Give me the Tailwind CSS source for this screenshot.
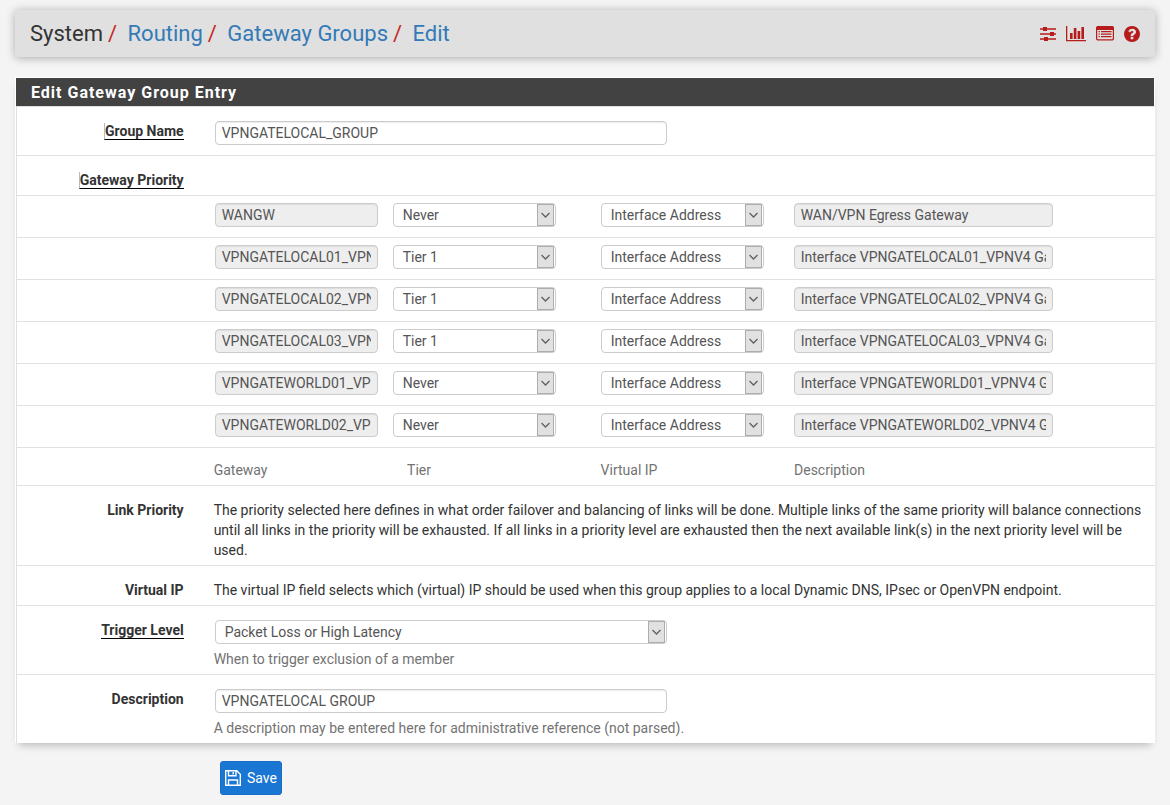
<!DOCTYPE html>
<html lang="en">
<head>
<meta charset="utf-8">
<meta name="viewport" content="width=device-width, initial-scale=1">
<title>System: Routing: Gateway Groups: Edit</title>
<script src="https://cdn.jsdelivr.net/npm/@tailwindcss/browser@4"></script>
</head>
<body class="min-h-screen bg-[#f4f4f4] px-[15px] py-[10px] font-['Roboto',sans-serif] text-sm leading-5 text-[#333]">
<header class="flex h-[47px] items-center justify-between rounded-[3px] bg-[#e0e0e0] px-[15px] shadow-[0_1px_10px_rgba(0,0,0,0.3)]">
  <nav aria-label="Breadcrumb">
    <ol class="flex text-[22px] leading-6">
      <li>System</li>
      <li><span class="px-[5px] text-[#c62828]">/</span> <a href="#" class="text-[#337ab7]">Routing</a></li>
      <li><span class="px-[5px] text-[#c62828]">/</span> <a href="#" class="text-[#337ab7]">Gateway Groups</a></li>
      <li><span class="px-[5px] text-[#c62828]">/</span> <a href="#" class="text-[#337ab7]">Edit</a></li>
    </ol>
  </nav>
  <div class="flex items-center gap-[10px] text-[#b71c1c]">
    <a href="#" aria-label="Advanced settings"><svg class="h-4 w-4" viewBox="0 0 16 16" fill="currentColor"><path d="M0 2.2h3v1.5H0zM7 2.2h9v1.5H7zM3 1h4v4H3zM0 7.2h10v1.5H0zM14 7.2h2v1.5h-2zM10 6h4v4h-4zM0 12.2h4v1.5H0zM8 12.2h8v1.5H8zM4 11h4v4H4z"/></svg></a>
    <a href="#" aria-label="Status"><svg class="h-4 w-5" viewBox="0 0 20 16" fill="currentColor"><path d="M0 0h1.3v14h19v1.3H0zM4 7h2.6v6H4zM7.8 2h2.6v11H7.8zM11.6 5h2.6v8h-2.6zM15.4 1H18v12h-2.6z"/></svg></a>
    <a href="#" aria-label="Logs"><svg class="h-4 w-[18px]" viewBox="0 0 18 16" fill="currentColor"><path fill-rule="evenodd" d="M1.2 0h15.6L18 1.2v12L16.8 14.4H1.2L0 13.2V1.2zM1.2 4v8.5q0 .7.7.7h14.2q.7 0 .7-.7V4z"/><path d="M2.5 5h1.3v1.3H2.5zM5 5h10.5v1.3H5zM2.5 7.5h1.3v1.3H2.5zM5 7.5h10.5v1.3H5zM2.5 10h1.3v1.3H2.5zM5 10h10.5v1.3H5z"/></svg></a>
    <a href="#" aria-label="Help"><svg class="h-4 w-4" viewBox="128 128 1536 1536" fill="currentColor"><path d="M1024 1376v-192q0-14-9-23t-23-9h-192q-14 0-23 9t-9 23v192q0 14 9 23t23 9h192q14 0 23-9t9-23zm256-672q0-88-55.5-163t-138.5-116-170-41q-243 0-371 213-15 24 8 42l132 100q7 6 19 6 16 0 25-12 53-68 86-92 34-24 86-24 48 0 85.5 26t37.5 59q0 38-20 61t-68 45q-63 28-115.5 86.5t-52.5 125.5v36q0 14 9 23t23 9h192q14 0 23-9t9-23q0-19 21.5-49.5t54.5-49.5q32-18 49-28.5t46-35 44.5-48 28-60.5 12.5-81zm384 192q0 209-103 385.5t-279.5 279.5-385.5 103-385.5-103-279.5-279.5-103-385.5 103-385.5 279.5-279.5 385.5-103 385.5 103 279.5 279.5 103 385.5z"/></svg></a>
  </div>
</header>

<form>
  <main class="mt-5 border-t border-l border-white bg-white shadow-[0_6px_8px_-4px_rgba(0,0,0,0.25)]">
    <h2 class="mr-px h-7 bg-[#424242] px-[15px] text-base leading-[30px] font-bold tracking-[1px] text-white">Edit Gateway Group Entry</h2>
    <div class="border-t border-l border-[#e0e0e0]">

      <div class="flex border-b border-[#e0e0e0] pt-[14px] pb-[10px]">
        <div class="w-1/6 shrink-0 pr-[23px] text-right"><label for="name" class="inline-block border-b border-black border-l border-l-[#bbb] leading-4 font-bold">Group Name</label></div>
        <div class="grow"><input id="name" type="text" value="VPNGATELOCAL_GROUP" class="ml-[8px] block h-6 w-[452px] rounded-[4px] border border-[#ccc] bg-white px-[6px] text-[#555] shadow-[inset_0_1px_1px_rgba(0,0,0,0.075)]"></div>
      </div>

      <div class="flex border-b border-[#e0e0e0] pt-[14px] pb-[5px]">
        <div class="w-1/6 shrink-0 pr-[23px] text-right"><span class="inline-block border-b border-black border-l border-l-[#bbb] leading-4 font-bold">Gateway Priority</span></div>
      </div>

      <div id="gateways"></div>

      <div class="flex border-b border-[#e0e0e0] pt-3 pb-[5px] text-[#737373]">
        <div class="w-1/6 shrink-0"></div>
        <div class="ml-[7px] w-[17%]">Gateway</div>
        <div class="w-[17%]">Tier</div>
        <div class="w-[17%]">Virtual IP</div>
        <div class="w-[17%]">Description</div>
      </div>

      <div class="flex border-b border-[#e0e0e0] pt-[14px] pb-[5px]">
        <div class="w-1/6 shrink-0 pr-[23px] text-right font-bold">Link Priority</div>
        <p class="ml-[7px] grow pr-3">The priority selected here defines in what order failover and balancing of links will be done. Multiple links of the same priority will balance connections until all links in the priority will be exhausted. If all links in a priority level are exhausted then the next available link(s) in the next priority level will be used.</p>
      </div>

      <div class="flex border-b border-[#e0e0e0] pt-[14px] pb-[5px]">
        <div class="w-1/6 shrink-0 pr-[23px] text-right font-bold">Virtual IP</div>
        <p class="ml-[7px] grow pr-3">The virtual IP field selects which (virtual) IP should be used when this group applies to a local Dynamic DNS, IPsec or OpenVPN endpoint.</p>
      </div>

      <div class="flex border-b border-[#e0e0e0] pt-[14px] pb-[5px]">
        <div class="w-1/6 shrink-0 pr-[23px] text-right"><label for="trigger" class="inline-block border-b border-black leading-4 font-bold">Trigger Level</label></div>
        <div class="grow">
          <div class="relative ml-[8px] w-[452px]">
            <select id="trigger" class="block h-6 w-full appearance-none rounded-[4px] border border-[#ccc] bg-white px-[9px] text-[#555]"><option>Packet Loss or High Latency</option><option>Member Down</option><option>Packet Loss</option><option>High Latency</option></select>
            <span class="pointer-events-none absolute top-px right-[2px] flex h-[22px] w-[17px] items-center justify-center border border-[#adadad] bg-[#e1e1e1]"><svg class="h-[6px] w-[9px]" viewBox="0 0 9 6" fill="none" stroke="#606060" stroke-width="1.3"><path d="M.5 1l4 4 4-4"/></svg></span>
          </div>
          <p class="mt-[5px] ml-[7px] text-[#737373]">When to trigger exclusion of a member</p>
        </div>
      </div>

      <div class="flex pt-[14px] pb-[5px]">
        <div class="w-1/6 shrink-0 pr-[23px] text-right"><label for="descr" class="font-bold">Description</label></div>
        <div class="grow">
          <input id="descr" type="text" value="VPNGATELOCAL GROUP" class="ml-[8px] block h-6 w-[452px] rounded-[4px] border border-[#ccc] bg-white px-[6px] text-[#555] shadow-[inset_0_1px_1px_rgba(0,0,0,0.075)]">
          <p class="mt-[5px] ml-[7px] text-[#737373]">A description may be entered here for administrative reference (not parsed).</p>
        </div>
      </div>
    </div>
  </main>

  <button type="submit" class="mt-[18px] ml-[205px] flex h-[34px] items-center gap-[6px] rounded-[3px] border border-[#1b6ec2] bg-[#1976d2] px-1 text-white">
    <svg class="h-4 w-4" viewBox="0 0 16 16" fill="none" stroke="currentColor" stroke-width="1.4"><path d="M.7.7h11l3.6 3.6v11H.7zM3.5.7v5h7.5v-5M3.5 15.3v-5.3h9v5.3M8.2 2v2.5"/></svg>
    Save
  </button>
</form>

<template id="row">
  <div class="flex border-b border-[#e0e0e0] pt-[7px] pb-[10px]">
    <div class="w-1/6 shrink-0"></div>
    <input type="text" readonly aria-label="Gateway" class="ml-[8px] block h-6 w-[163px] rounded-[4px] border border-[#ccc] bg-[#eee] px-[6px] text-[#555] shadow-[inset_0_1px_1px_rgba(0,0,0,0.075)]">
    <div class="relative ml-[15px] w-[163px]">
      <select aria-label="Tier" class="block h-6 w-full appearance-none rounded-[4px] border border-[#ccc] bg-white px-[9px] text-[#555]"><option>Never</option><option>Tier 1</option><option>Tier 2</option><option>Tier 3</option><option>Tier 4</option><option>Tier 5</option></select>
      <span class="pointer-events-none absolute top-px right-[2px] flex h-[22px] w-[17px] items-center justify-center border border-[#adadad] bg-[#e1e1e1]"><svg class="h-[6px] w-[9px]" viewBox="0 0 9 6" fill="none" stroke="#606060" stroke-width="1.3"><path d="M.5 1l4 4 4-4"/></svg></span>
    </div>
    <div class="relative ml-[45px] w-[163px]">
      <select aria-label="Virtual IP" class="block h-6 w-full appearance-none rounded-[4px] border border-[#ccc] bg-white px-[9px] text-[#555]"><option>Interface Address</option></select>
      <span class="pointer-events-none absolute top-px right-[2px] flex h-[22px] w-[17px] items-center justify-center border border-[#adadad] bg-[#e1e1e1]"><svg class="h-[6px] w-[9px]" viewBox="0 0 9 6" fill="none" stroke="#606060" stroke-width="1.3"><path d="M.5 1l4 4 4-4"/></svg></span>
    </div>
    <input type="text" readonly aria-label="Description" class="ml-[30px] block h-6 w-[259px] rounded-[4px] border border-[#ccc] bg-[#eee] px-[6px] text-[#555] shadow-[inset_0_1px_1px_rgba(0,0,0,0.075)]">
  </div>
</template>
<script>
  const gateways = [
    ['WANGW', 'Never', 'WAN/VPN Egress Gateway'],
    ['VPNGATELOCAL01_VPNV4', 'Tier 1', 'Interface VPNGATELOCAL01_VPNV4 Gateway'],
    ['VPNGATELOCAL02_VPNV4', 'Tier 1', 'Interface VPNGATELOCAL02_VPNV4 Gateway'],
    ['VPNGATELOCAL03_VPNV4', 'Tier 1', 'Interface VPNGATELOCAL03_VPNV4 Gateway'],
    ['VPNGATEWORLD01_VPNV4', 'Never', 'Interface VPNGATEWORLD01_VPNV4 Gateway'],
    ['VPNGATEWORLD02_VPNV4', 'Never', 'Interface VPNGATEWORLD02_VPNV4 Gateway'],
  ];
  const template = document.getElementById('row');
  for (const [name, tier, description] of gateways) {
    const row = template.content.cloneNode(true);
    const [nameInput, descriptionInput] = row.querySelectorAll('input');
    nameInput.value = name;
    descriptionInput.value = description;
    row.querySelector('select').value = tier;
    document.getElementById('gateways').append(row);
  }
</script>
</body>
</html>
